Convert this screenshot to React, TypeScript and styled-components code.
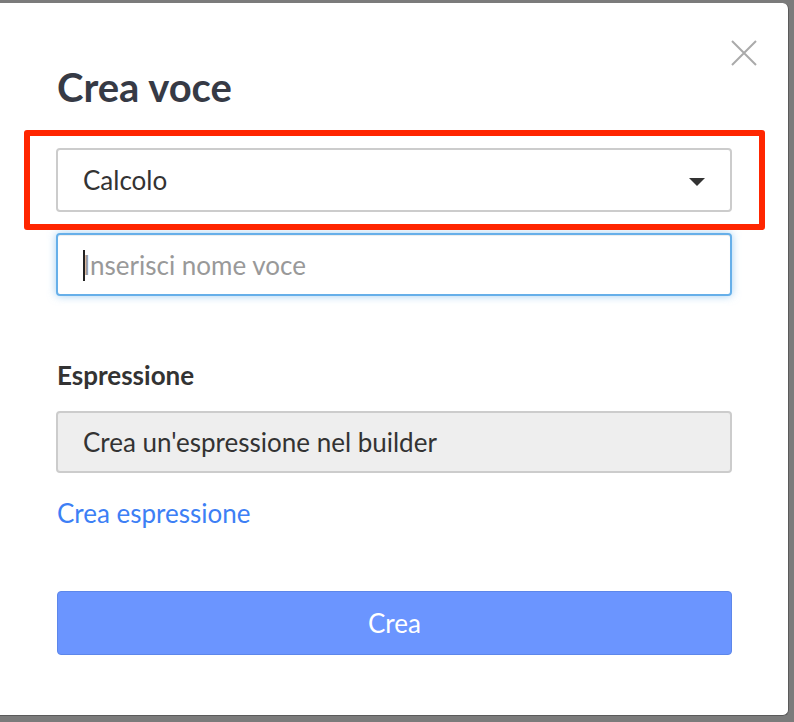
import React from "react";
import styled, { createGlobalStyle } from "styled-components";

const Global = createGlobalStyle`
  html, body { margin: 0; padding: 0; }
  body {
    background: #7b7b7b;
    font-family: Lato, "Open Sans", sans-serif;
    overflow: hidden;
  }
`;

const Backdrop = styled.div`
  width: 794px;
  height: 722px;
  padding-top: 3px;
  box-sizing: border-box;
`;

const Modal = styled.div`
  position: relative;
  width: 789px;
  height: 713px;
  box-sizing: border-box;
  background: #fff;
  border-right: 1px solid #5a5a5a;
  border-bottom: 1px solid #5a5a5a;
  border-radius: 0 6px 6px 0;
  padding: 60px 56px 0 56px;
  display: flex;
  flex-direction: column;
`;

const Title = styled.h2`
  margin: 0 0 37px 1px;
  font-size: 40px;
  line-height: 48px;
  font-weight: 700;
  color: #363a45;
`;

const Close = styled.button`
  position: absolute;
  top: 37px;
  right: 31px;
  width: 26px;
  height: 26px;
  padding: 0;
  border: none;
  background: transparent;
  cursor: pointer;
`;

const Highlight = styled.div`
  position: absolute;
  left: 24px;
  top: 127px;
  width: 741px;
  height: 100px;
  box-sizing: border-box;
  border: 6px solid #ff2600;
  border-radius: 3px;
  pointer-events: none;
`;

const Field = styled.div<{ $h: number; $mb: number; $variant: "select" | "focus" | "readonly" }>`
  position: relative;
  height: ${(p) => p.$h}px;
  margin-bottom: ${(p) => p.$mb}px;
  box-sizing: border-box;
  display: flex;
  align-items: center;
  padding: 1px 25px 0;
  border-radius: 4px;
  font-size: 26px;
  line-height: 31px;
  border: 2px solid
    ${(p) => (p.$variant === "focus" ? "#66afe9" : "#cccccc")};
  background: ${(p) => (p.$variant === "readonly" ? "#eeeeee" : "#ffffff")};
  color: #333;
  box-shadow: ${(p) =>
    p.$variant === "focus"
      ? "inset 0 1px 1px rgba(0,0,0,.075), 0 0 8px rgba(102,175,233,.6)"
      : "none"};
`;

const Placeholder = styled.span`
  color: #999;
`;

const Caret = styled.span`
  position: absolute;
  left: 25px;
  top: 15px;
  width: 2px;
  height: 31px;
  background: #222;
`;

const Arrow = styled.span`
  position: absolute;
  right: 25px;
  top: 28px;
  width: 0;
  height: 0;
  border-left: 8px solid transparent;
  border-right: 8px solid transparent;
  border-top: 8px solid #333;
`;

const Label = styled.div`
  margin: 64px 0 20px 1px;
  font-size: 26px;
  line-height: 31px;
  font-weight: 700;
  color: #333;
`;

const Link = styled.a`
  margin: 1px 0 62px 1px;
  font-size: 26px;
  line-height: 31px;
  color: #3d7ff5;
  text-decoration: none;
  align-self: flex-start;
  cursor: pointer;
`;

const Button = styled.button`
  height: 64px;
  margin-left: 1px;
  border: 1px solid #5d87ea;
  border-radius: 4px;
  background: #6b95ff;
  color: #fff;
  font-family: Lato, "Open Sans", sans-serif;
  font-size: 26px;
  cursor: pointer;
`;

export default function App() {
  return (
    <>
      <Global />
      <Backdrop>
        <Modal>
          <Close aria-label="Chiudi">
            <svg width="26" height="26" viewBox="0 0 26 26">
              <path d="M1 1 L25 25 M25 1 L1 25" stroke="#aaaaaa" strokeWidth="2" fill="none" />
            </svg>
          </Close>
          <Title>Crea voce</Title>
          <Field $h={64} $mb={21} $variant="select">
            Calcolo
            <Arrow />
          </Field>
          <Field $h={63} $mb={0} $variant="focus">
            <Caret />
            <Placeholder>Inserisci nome voce</Placeholder>
          </Field>
          <Label>Espressione</Label>
          <Field $h={62} $mb={24} $variant="readonly">
            Crea un'espressione nel builder
          </Field>
          <Link>Crea espressione</Link>
          <Button>Crea</Button>
          <Highlight />
        </Modal>
      </Backdrop>
    </>
  );
}
